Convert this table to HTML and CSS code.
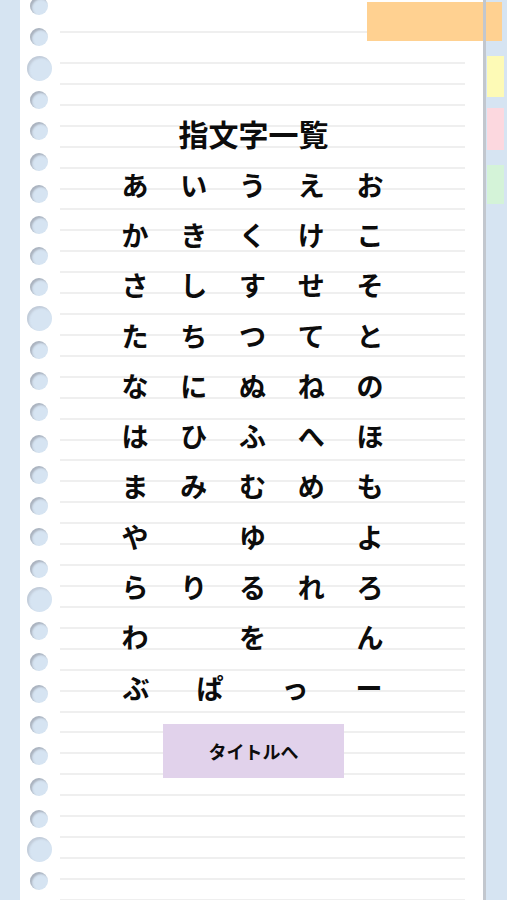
FILE: index.html
```html
<!DOCTYPE html>
<html lang="ja">
<head>
<meta charset="utf-8">
<title>指文字一覧</title>
<link rel="stylesheet" href="styles.css">
</head>
<body>
<div class="desk">
  <div class="paper">
    <div class="holes">
      <span class="hole"></span><span class="hole"></span><span class="hole big"></span><span class="hole"></span>
      <span class="hole"></span><span class="hole"></span><span class="hole"></span><span class="hole"></span>
      <span class="hole"></span><span class="hole"></span><span class="hole big"></span><span class="hole"></span>
      <span class="hole"></span><span class="hole"></span><span class="hole"></span><span class="hole"></span>
      <span class="hole"></span><span class="hole"></span><span class="hole"></span><span class="hole big"></span>
      <span class="hole"></span><span class="hole"></span><span class="hole"></span><span class="hole"></span>
      <span class="hole"></span><span class="hole"></span><span class="hole"></span><span class="hole big"></span>
      <span class="hole"></span>
    </div>
    <div class="tab-top"></div>
    <main class="sheet">
      <h1 class="title">指文字一覧</h1>
      <div class="chart">
        <span>あ</span><span>い</span><span>う</span><span>え</span><span>お</span>
        <span>か</span><span>き</span><span>く</span><span>け</span><span>こ</span>
        <span>さ</span><span>し</span><span>す</span><span>せ</span><span>そ</span>
        <span>た</span><span>ち</span><span>つ</span><span>て</span><span>と</span>
        <span>な</span><span>に</span><span>ぬ</span><span>ね</span><span>の</span>
        <span>は</span><span>ひ</span><span>ふ</span><span>へ</span><span>ほ</span>
        <span>ま</span><span>み</span><span>む</span><span>め</span><span>も</span>
        <span>や</span><span></span><span>ゆ</span><span></span><span>よ</span>
        <span>ら</span><span>り</span><span>る</span><span>れ</span><span>ろ</span>
        <span>わ</span><span></span><span>を</span><span></span><span>ん</span>
      </div>
      <div class="chart-last">
        <span>ぶ</span><span>ぱ</span><span>っ</span><span>ー</span>
      </div>
      <button class="to-title" type="button">タイトルへ</button>
    </main>
  </div>
  <div class="side-tabs">
    <span class="side-tab yellow"></span>
    <span class="side-tab pink"></span>
    <span class="side-tab green"></span>
  </div>
</div>
</body>
</html>
```

FILE: styles.css
```css
html, body {
  margin: 0;
  padding: 0;
}

body {
  background: #d6e4f2;
  font-family: "Noto Sans CJK JP", "Noto Sans", sans-serif;
  color: #0c0c0c;
  overflow: hidden;
}

.desk {
  display: flex;
  align-items: flex-start;
  padding-left: 20px;
  height: 900px;
}

.paper {
  position: relative;
  width: 463px;
  height: 900px;
  border-right: 3px solid #c2c7ce;
  background-color: #fff;
  background-image:
    linear-gradient(#efefef, #efefef),
    repeating-linear-gradient(to bottom, #efefef 0, #efefef 2px, transparent 2px, transparent 20.92px);
  background-size: 405px 2px, 405px 100%;
  background-position: 40px 31px, 40px 62px;
  background-repeat: no-repeat, no-repeat;
  overflow: hidden;
}

.holes {
  position: absolute;
  left: 0;
  top: -9.625px;
  width: 38px;
  display: flex;
  flex-direction: column;
  align-items: center;
}

.hole {
  flex: 0 0 31.25px;
  display: flex;
  align-items: center;
  justify-content: center;
}

.hole::before {
  content: "";
  width: 18px;
  height: 18px;
  border-radius: 50%;
  background: #d6e4f2;
  box-shadow: inset 2px 2px 2px rgba(110, 110, 120, 0.42);
}

.hole.big::before {
  width: 25px;
  height: 25px;
  box-shadow: inset 2px 2px 2px rgba(140, 140, 150, 0.28);
}

.tab-top {
  position: absolute;
  top: 2px;
  left: 347px;
  width: 136px;
  height: 39px;
  background: #ffd191;
  z-index: 2;
}

.side-tabs {
  position: relative;
  margin-left: 1px;
  width: 17px;
  padding-top: 56px;
  display: flex;
  flex-direction: column;
}

.side-tabs::before {
  content: "";
  position: absolute;
  top: 2px;
  left: -1px;
  width: 16px;
  height: 39px;
  background: #ffd191;
}

.side-tab {
  display: block;
  width: 17px;
}

.side-tab.yellow {
  height: 41px;
  background: #fdfab6;
}

.side-tab.pink {
  height: 42px;
  margin-top: 11px;
  background: #fcd8df;
}

.side-tab.green {
  height: 39px;
  margin-top: 15px;
  background: #d4f3d8;
}

.sheet {
  display: flex;
  flex-direction: column;
  align-items: center;
  padding-top: 113px;
  padding-left: 4px;
}

.title {
  margin: 0;
  font-size: 30px;
  font-weight: 700;
  line-height: 40px;
}

.chart {
  margin-top: 6px;
  display: grid;
  grid-template-columns: repeat(5, 58.75px);
  grid-auto-rows: 50.3px;
  margin-left: -2px;
}

.chart span,
.chart-last span {
  display: flex;
  align-items: center;
  justify-content: center;
  font-size: 27px;
  font-weight: 700;
  line-height: 1;
}

.chart-last {
  display: grid;
  grid-template-columns: 63px 85px 85px 63px;
  grid-auto-rows: 50.3px;
  margin-left: -2px;
}

.to-title {
  margin-top: 12px;
  width: 181px;
  height: 54px;
  border: none;
  background: #e1d2eb;
  font-family: "Noto Sans CJK JP", "Noto Sans", sans-serif;
  font-size: 18px;
  font-weight: 700;
  color: #0c0c0c;
  padding: 0;
}
```
